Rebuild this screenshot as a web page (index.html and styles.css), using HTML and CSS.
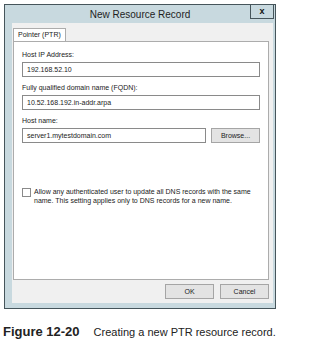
FILE: index.html
```html
<!DOCTYPE html>
<html lang="en">
<head>
    <meta charset="UTF-8">
    <meta name="viewport" content="width=device-width, initial-scale=1.0">
    <title>New Resource Record</title>
    <link rel="stylesheet" href="styles.css">
</head>
<body>
    <div class="window">
        <div class="titlebar">
            <span></span>
            <span class="title">New Resource Record</span>
            <span class="close">x</span>
        </div>
        <div class="client">
            <div class="tabs">
                <div class="tab">Pointer (PTR)</div>
            </div>
            <div class="panel">
                <div class="field">
                    <label>Host IP Address:</label>
                    <div class="input">192.168.52.10</div>
                </div>
                <div class="field">
                    <label>Fully qualified domain name (FQDN):</label>
                    <div class="input">10.52.168.192.in-addr.arpa</div>
                </div>
                <div class="field">
                    <label>Host name:</label>
                    <div class="row">
                        <div class="input grow">server1.mytestdomain.com</div>
                        <div class="button">Browse...</div>
                    </div>
                </div>
                <div class="check">
                    <span class="box"></span>
                    <span class="check-text">Allow any authenticated user to update all DNS records with the same name. This setting applies only to DNS records for a new name.</span>
                </div>
            </div>
            <div class="actions">
                <div class="button">OK</div>
                <div class="button">Cancel</div>
            </div>
        </div>
    </div>
    <p class="caption"><b>Figure 12-20</b>Creating a new PTR resource record.</p>
</body>
</html>
```

FILE: styles.css
```css
body {
    margin: 0;
    background-color: #fff;
    font-family: "Liberation Sans", Arial, sans-serif;
}
.window {
    margin: 4px 0 0 4px;
    width: 261px;
    height: 298px;
    border: 1px solid #46555b;
    background-color: #c8d9df;
    display: flex;
    flex-direction: column;
    padding: 0 2px 5px 7px;
}
.titlebar {
    height: 18px;
    display: grid;
    grid-template-columns: 1fr auto 1fr;
    align-items: start;
    margin-left: -7px;
    margin-right: -2px;
}
.title {
    font-size: 10px;
    color: #1e1e1e;
    line-height: 18px;
    padding-top: 1px;
}
.close {
    justify-self: end;
    width: 22px;
    height: 13px;
    border: 1px solid #46555b;
    border-top: 0;
    margin-right: 1px;
    font-size: 9px;
    font-weight: bold;
    text-align: center;
    line-height: 12px;
    color: #111;
}
.client {
    flex: 1;
    background-color: #f0f0f0;
    padding: 5px 4px 0 1px;
    display: flex;
    flex-direction: column;
}
.tabs {
    display: flex;
    height: 13px;
}
.tab {
    background-color: #fff;
    border: 1px solid #acacac;
    border-bottom: 0;
    padding: 0 4px;
    font-size: 7px;
    line-height: 12px;
    color: #222;
    white-space: nowrap;
}
.panel {
    height: 229px;
    background-color: #fff;
    border: 1px solid #acacac;
    padding: 8px 8px 0 8px;
    display: flex;
    flex-direction: column;
    gap: 6px;
}
.field label {
    display: block;
    font-size: 7px;
    line-height: 10px;
    color: #222;
    margin-bottom: 2px;
}
.input {
    height: 13px;
    border: 1px solid #8a8a8a;
    font-size: 7px;
    line-height: 13px;
    padding-left: 4px;
    color: #222;
}
.row {
    display: flex;
    gap: 5px;
}
.grow {
    flex: 1;
}
.button {
    width: 47px;
    height: 13px;
    border: 1px solid #a5a5a5;
    background-color: #e3e3e3;
    font-size: 7px;
    line-height: 13px;
    text-align: center;
    color: #222;
}
.check {
    display: flex;
    gap: 3px;
    margin-top: 38px;
}
.box {
    flex: none;
    width: 7px;
    height: 7px;
    border: 1px solid #8a8a8a;
    margin-top: 1px;
    background-color: #fff;
}
.check-text {
    font-size: 7px;
    line-height: 9px;
    color: #222;
    width: 226px;
}
.actions {
    display: flex;
    justify-content: flex-end;
    gap: 6px;
    margin-top: 4px;
}
.caption {
    margin: 15px 0 0 3px;
    font-size: 11px;
    color: #222;
}
.caption b {
    font-size: 13px;
    margin-right: 14px;
}
```
